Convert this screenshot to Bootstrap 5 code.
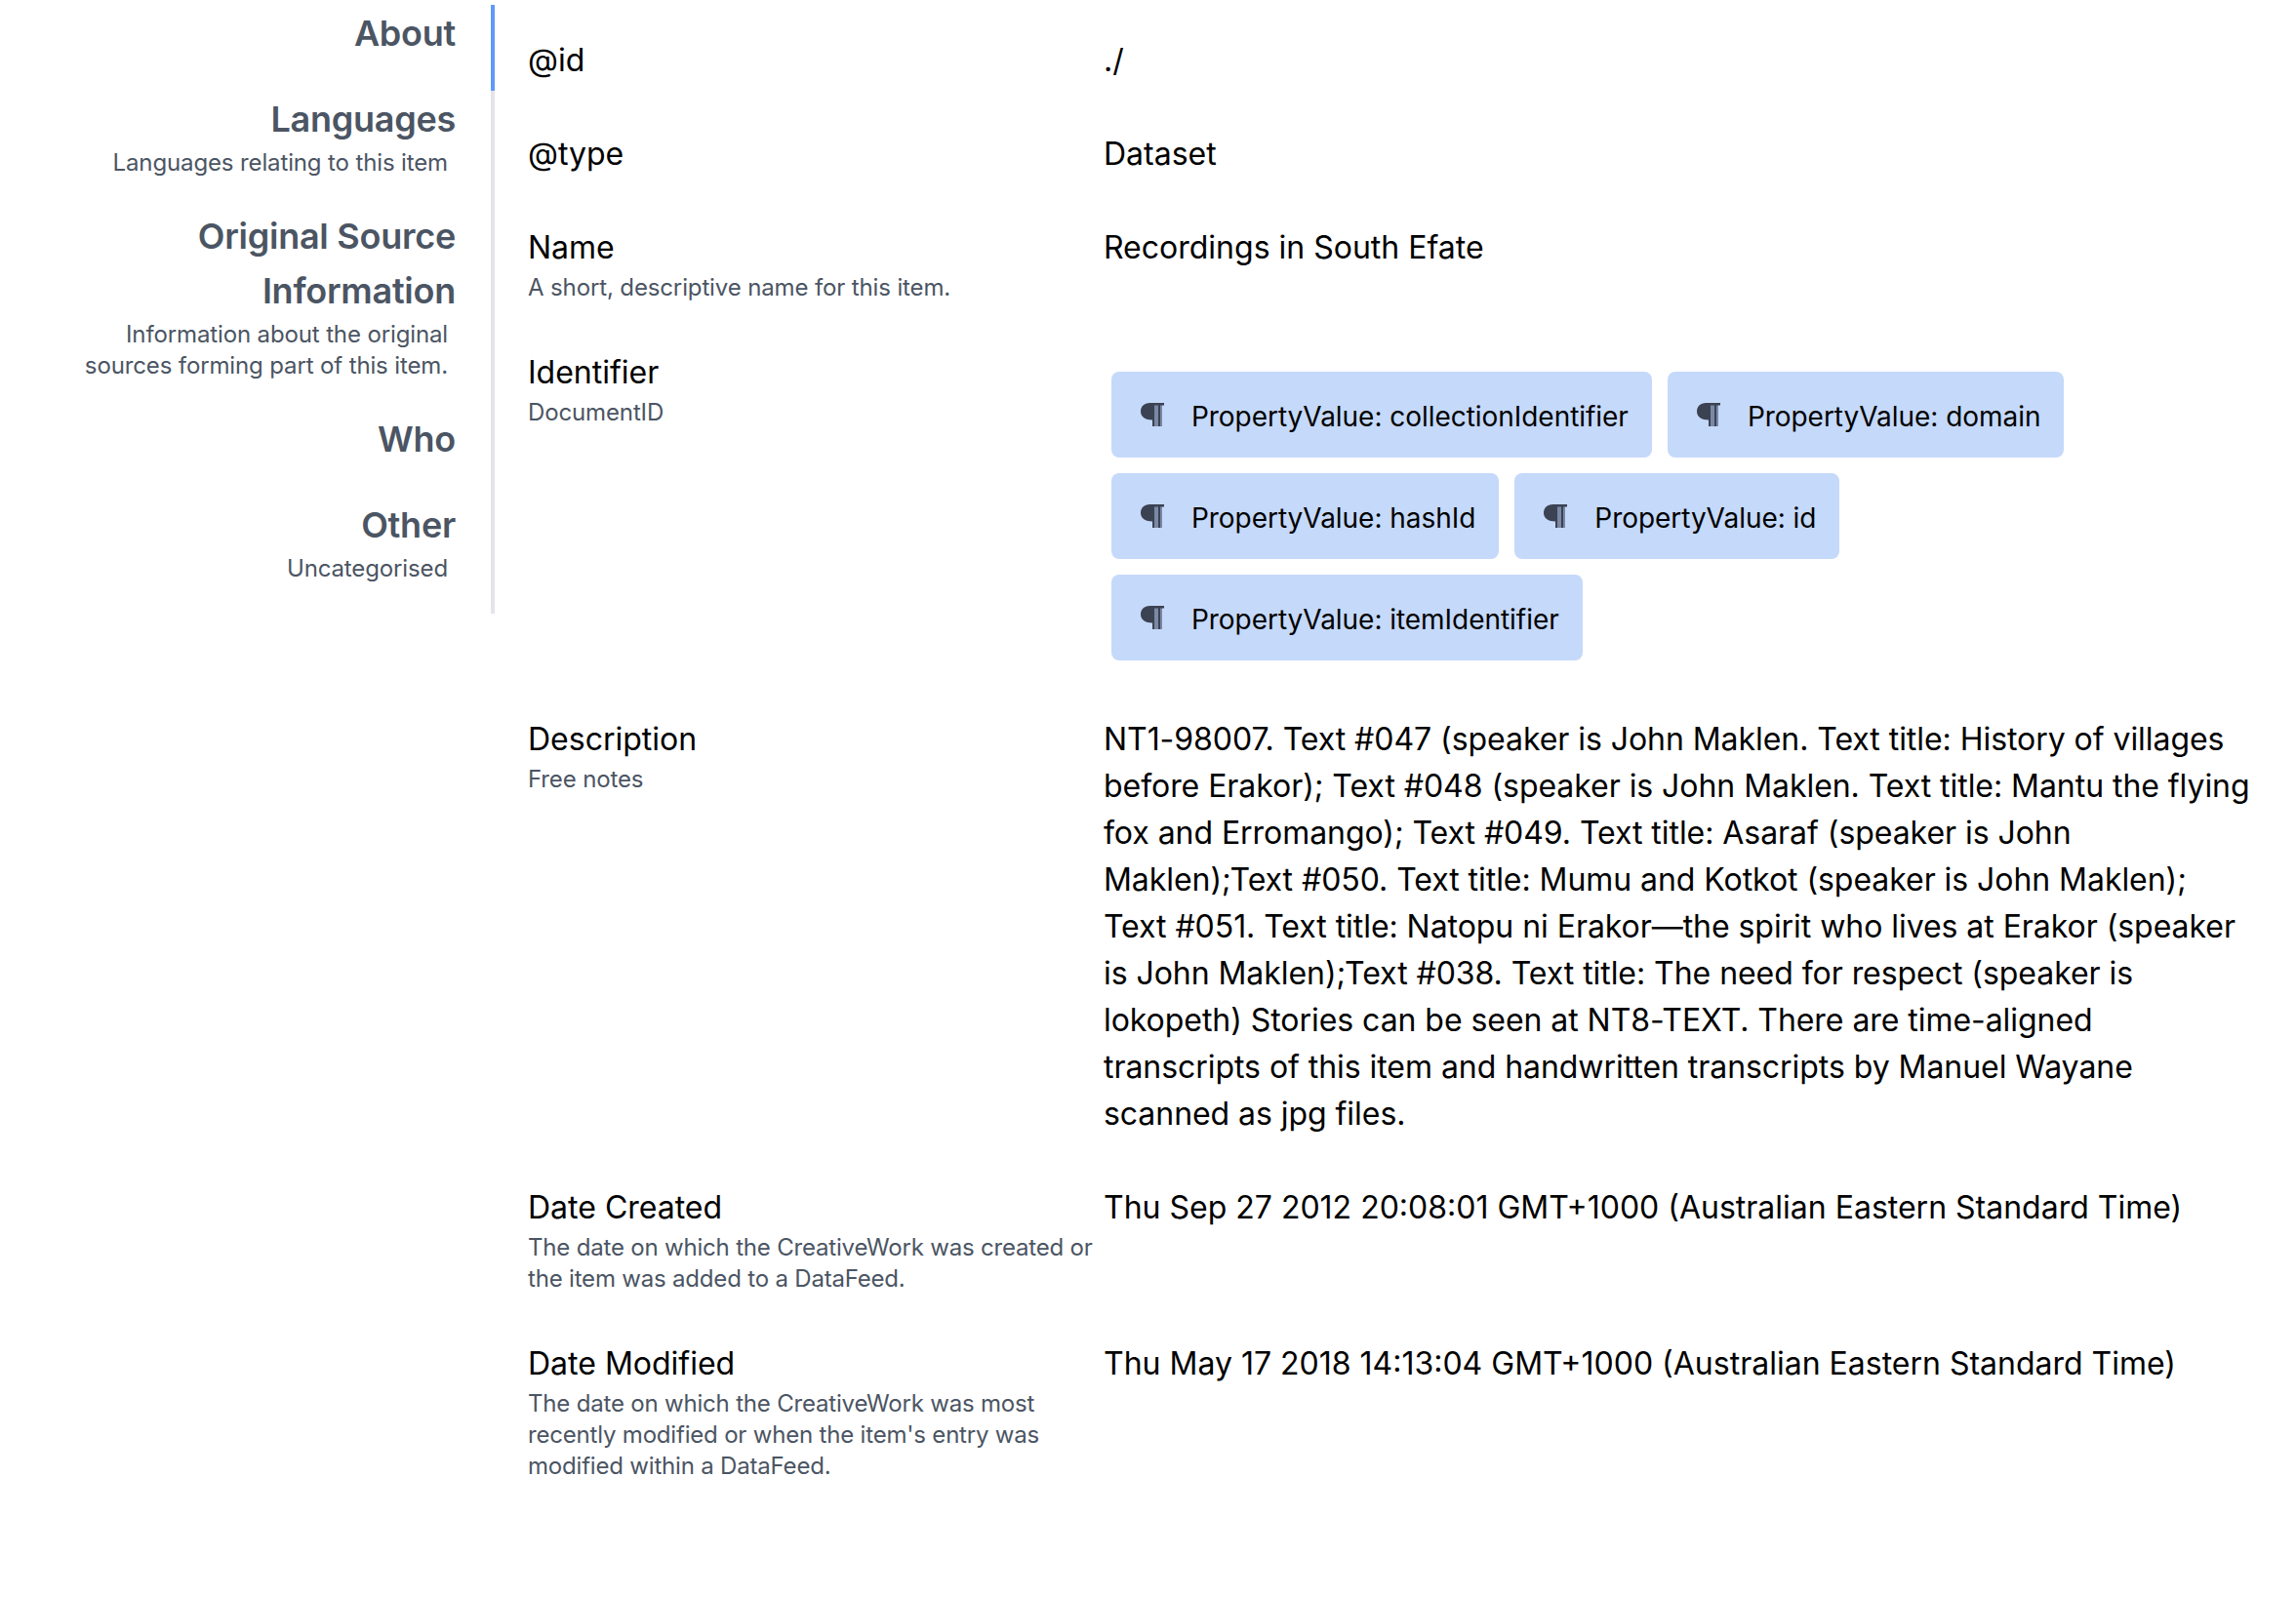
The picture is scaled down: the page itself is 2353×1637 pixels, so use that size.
<!DOCTYPE html>
<html lang="en">
<head>
<meta charset="utf-8">
<meta name="viewport" content="width=device-width, initial-scale=1">
<title>Recordings in South Efate</title>
<link href="https://cdn.jsdelivr.net/npm/bootstrap@5.3.0/dist/css/bootstrap.min.css" rel="stylesheet">
<style>
  body { font-family: Inter, "Liberation Sans", sans-serif; font-size: 32px; line-height: 48px; color: #000; background: #fff; }
  .page-wrap { padding-top: 5px; }
  .side-tabs { width: 507px; flex: none; }
  .side-tabs .nav-link { padding: 1px 36px 31px 60px; border-right: 4px solid #e4e4eb; border-radius: 0; color: #4b5563; font-size: 36px; font-weight: 600; line-height: 56px; letter-spacing: -.25px; }
  .side-tabs .nav-link.active { border-right-color: #609af8; }
  .hint { display: block; padding-top: 1px; margin-bottom: -1px; color: #4b5563; font-size: 24px; line-height: 32px; font-weight: 400; letter-spacing: -.13px; }
  .side-tabs .hint { padding-right: 8px; }
  .props { width: 1770px; margin-left: 34px; padding-top: 33px; }
  .prop { padding-bottom: 48px; }
  .long-text { letter-spacing: -.05px; }
  .dates .hint { letter-spacing: -.19px; }
  .chips { padding: 15px 0 1px; }
  .chip { margin: 8px; height: 88px; padding: 0 24px 0 30px; border-radius: 8px; background: #c5d9fa; font-size: 28px; letter-spacing: -.04px; color: #000; text-decoration: none; }
  .chip span { padding-top: 4px; }
  .chip svg { width: 24px; height: 24px; margin-right: 28px; fill: #3b4252; }
</style>
<script src="https://cdn.jsdelivr.net/npm/bootstrap@5.3.0/dist/js/bootstrap.bundle.min.js"></script>
</head>
<body>
<svg class="d-none" aria-hidden="true"><symbol id="para" viewBox="0 0 24 24"><path d="M9.5 0H24V2.4H22V24H12V17.5C5 17.5 0 14.5 0 8.8C0 3.5 3.5 0 9.5 0Z"/><path d="M14 2.4H18V24H14ZM20 2.4H22V24H20Z" fill="#7a88a5"/></symbol></svg>
<div class="page-wrap d-flex align-items-start">
  <nav class="side-tabs nav flex-column text-end">
    <a class="nav-link active" href="#about">About</a>
    <a class="nav-link" href="#languages">Languages<span class="hint">Languages relating to this item</span></a>
    <a class="nav-link" href="#source">Original Source Information<span class="hint">Information about the original sources forming part of this item.</span></a>
    <a class="nav-link" href="#who">Who</a>
    <a class="nav-link" href="#other">Other<span class="hint">Uncategorised</span></a>
  </nav>
  <main class="props" id="about">
    <div class="prop row g-0"><div class="col-4">@id</div><div class="col-8">./</div></div>
    <div class="prop row g-0"><div class="col-4">@type</div><div class="col-8">Dataset</div></div>
    <div class="prop row g-0"><div class="col-4">Name<span class="hint">A short, descriptive name for this item.</span></div><div class="col-8">Recordings in South Efate</div></div>
    <div class="prop row g-0">
      <div class="col-4">Identifier<span class="hint">DocumentID</span></div>
      <div class="col-8 chips d-flex flex-wrap">
        <a class="chip d-inline-flex align-items-center" href="#"><svg><use href="#para"/></svg><span>PropertyValue: collectionIdentifier</span></a>
        <a class="chip d-inline-flex align-items-center" href="#"><svg><use href="#para"/></svg><span>PropertyValue: domain</span></a>
        <a class="chip d-inline-flex align-items-center" href="#"><svg><use href="#para"/></svg><span>PropertyValue: hashId</span></a>
        <a class="chip d-inline-flex align-items-center" href="#"><svg><use href="#para"/></svg><span>PropertyValue: id</span></a>
        <a class="chip d-inline-flex align-items-center" href="#"><svg><use href="#para"/></svg><span>PropertyValue: itemIdentifier</span></a>
      </div>
    </div>
    <div class="prop row g-0">
      <div class="col-4">Description<span class="hint">Free notes</span></div>
      <div class="col-8 long-text">NT1-98007. Text #047 (speaker is John Maklen. Text title: History of villages before Erakor); Text #048 (speaker is John Maklen. Text title: Mantu the flying fox and Erromango); Text #049. Text title: Asaraf (speaker is John Maklen);Text #050. Text title: Mumu and Kotkot (speaker is John Maklen); Text #051. Text title: Natopu ni Erakor—the spirit who lives at Erakor (speaker is John Maklen);Text #038. Text title: The need for respect (speaker is lokopeth) Stories can be seen at NT8-TEXT. There are time-aligned transcripts of this item and handwritten transcripts by Manuel Wayane scanned as jpg files.</div>
    </div>
    <div class="prop dates row g-0"><div class="col-4">Date Created<span class="hint">The date on which the CreativeWork was created or the item was added to a DataFeed.</span></div><div class="col-8">Thu Sep 27 2012 20:08:01 GMT+1000 (Australian Eastern Standard Time)</div></div>
    <div class="prop dates row g-0"><div class="col-4">Date Modified<span class="hint">The date on which the CreativeWork was most recently modified or when the item's entry was modified within a DataFeed.</span></div><div class="col-8">Thu May 17 2018 14:13:04 GMT+1000 (Australian Eastern Standard Time)</div></div>
  </main>
</div>
</body>
</html>
